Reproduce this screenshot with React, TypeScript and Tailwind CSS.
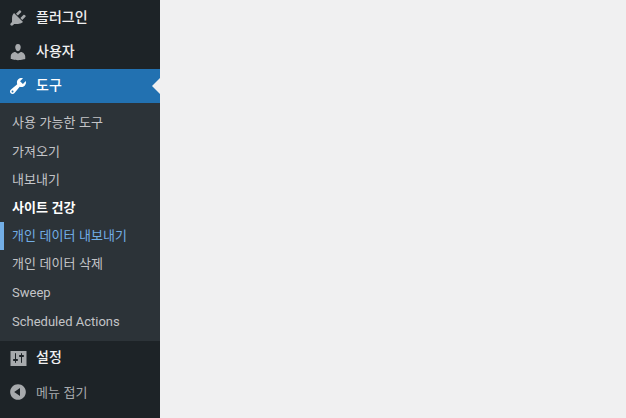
const font = { fontFamily: '"Noto Sans CJK KR", "Noto Sans", sans-serif' };

function Icon({ d, white }: { d: string; white?: boolean }) {
  return (
    <svg viewBox="0 0 20 20" className={`h-5 w-5 shrink-0 ${white ? "fill-white" : "fill-[#a7aaad]"}`}>
      <path d={d} />
    </svg>
  );
}

const plugin =
  "M13.11 4.36L9.87 7.6 8 5.73l3.24-3.24c.35-.34 1.05-.2 1.56.32.52.51.66 1.21.31 1.55zm-8 1.77l.91-1.12 9.01 9.01-1.19.84c-.71.71-2.63 1.16-3.82 1.16H6.14L4.9 17.26c-.59.59-1.54.59-2.12 0-.59-.58-.59-1.53 0-2.12l1.24-1.24v-3.88c0-1.13.4-3.19 1.09-3.89zm7.26 3.97l3.24-3.24c.34-.35 1.04-.21 1.55.31.52.51.66 1.21.31 1.55l-3.24 3.25z";
const user =
  "M10 9.25c-2.27 0-2.73-3.44-2.73-3.44C7 4.02 7.82 2 9.97 2c2.16 0 2.98 2.02 2.71 3.81 0 0-.41 3.44-2.68 3.44zm0 2.57L12.72 10c2.39 0 4.52 2.33 4.52 4.53v2.49s-3.65 1.13-7.24 1.13c-3.65 0-7.24-1.13-7.24-1.13v-2.49c0-2.25 1.94-4.48 4.47-4.48z";
const tool =
  "M16.68 9.77c-1.34 1.34-3.3 1.67-4.95.99l-5.41 6.52c-.99.99-2.59.99-3.58 0s-.99-2.59 0-3.57l6.52-5.42c-.68-1.65-.35-3.61.99-4.95 1.28-1.28 3.12-1.62 4.72-1.06l-2.89 2.89 2.82 2.82 2.86-2.87c.53 1.58.18 3.39-1.08 4.65zM3.81 16.21c.4.39 1.04.39 1.43 0 .4-.4.4-1.04 0-1.43-.39-.4-1.03-.4-1.43 0-.39.39-.39 1.03 0 1.43z";
const settings =
  "M18.5 18V3H2.5V18zM8 11h1c.55 0 1 .45 1 1s-.45 1-1 1H8v1.5c0 .28-.22.5-.5.5s-.5-.22-.5-.5V13H6c-.55 0-1-.45-1-1s.45-1 1-1h1V5.5c0-.28.22-.5.5-.5s.5.22.5.5V11zm5-2h-1c-.55 0-1-.45-1-1s.45-1 1-1h1V5.5c0-.28.22-.5.5-.5s.5.22.5.5V7h1c.55 0 1 .45 1 1s-.45 1-1 1h-1v5.5c0 .28-.22.5-.5.5s-.5-.22-.5-.5V9z";
const collapse =
  "M10 2.16c4.33 0 7.84 3.51 7.84 7.84s-3.51 7.84-7.84 7.84S2.16 14.33 2.16 10 5.71 2.16 10 2.16zm2 11.72V6.12L6.18 9.97z";

function Row({ d, label, cls = "h-[34px]", textCls = "pb-[3px]" }: { d: string; label: string; cls?: string; textCls?: string }) {
  return (
    <div className={`flex ${cls} items-center gap-[8px] pl-[8px] text-[14px] font-medium text-[#f0f0f1]`}>
      <Icon d={d} />
      <span className={textCls}>{label}</span>
    </div>
  );
}

function Sub({ label, cls = "text-[#c3c4c7]" }: { label: string; cls?: string }) {
  return <div className={`flex h-[28.4px] items-center pl-[12px] text-[13px] [word-spacing:0.75px] ${cls}`}>{label}</div>;
}

export default function App() {
  return (
    <div className="flex h-[418px] w-[626px] overflow-hidden bg-[#f0f0f1]" style={font}>
      <div className="flex w-[160px] shrink-0 flex-col bg-[#1d2327]">
        <Row d={plugin} label="플러그인" cls="h-[35px] pt-[1px]" textCls="pb-[4px]" />
        <Row d={user} label="사용자" />
        <div className="relative flex h-[34px] items-center gap-[8px] bg-[#2271b1] pl-[8px] text-[14px] font-medium text-white">
          <Icon d={tool} white />
          <span className="pb-[3px]">도구</span>
          <div className="absolute right-0 top-[9px] h-0 w-0 border-y-[8px] border-r-[8px] border-y-transparent border-r-[#f0f0f1]" />
        </div>
        <div className="bg-[#2c3338] pb-[6px] pt-[5px]">
          <Sub label="사용 가능한 도구" />
          <Sub label="가져오기" />
          <Sub label="내보내기" />
          <Sub label="사이트 건강" cls="font-bold text-white pb-[2px]" />
          <div className="border-l-4 border-[#72aee6]">
            <div className="flex h-[28.4px] items-center pb-[2px] pl-[8px] text-[13px] text-[#72aee6] [word-spacing:0.75px]">개인 데이터 내보내기</div>
          </div>
          <Sub label="개인 데이터 삭제" cls="text-[#c3c4c7] pb-[2px]" />
          <div className="flex h-[28.4px] items-center pl-[12px] font-['Roboto'] text-[13px] text-[#c3c4c7]">Sweep</div>
          <div className="flex h-[28.4px] items-center pl-[12px] pt-[1px] font-['Roboto'] text-[13px] text-[#c3c4c7]">Scheduled Actions</div>
        </div>
        <Row d={settings} label="설정" />
        <div className="flex h-[34px] items-center gap-[8px] pl-[8px] text-[13px] text-[#a7aaad] [word-spacing:0.75px]">
          <Icon d={collapse} />
          <span className="pb-[1px]">메뉴 접기</span>
        </div>
      </div>
      <div className="flex-1" />
    </div>
  );
}
